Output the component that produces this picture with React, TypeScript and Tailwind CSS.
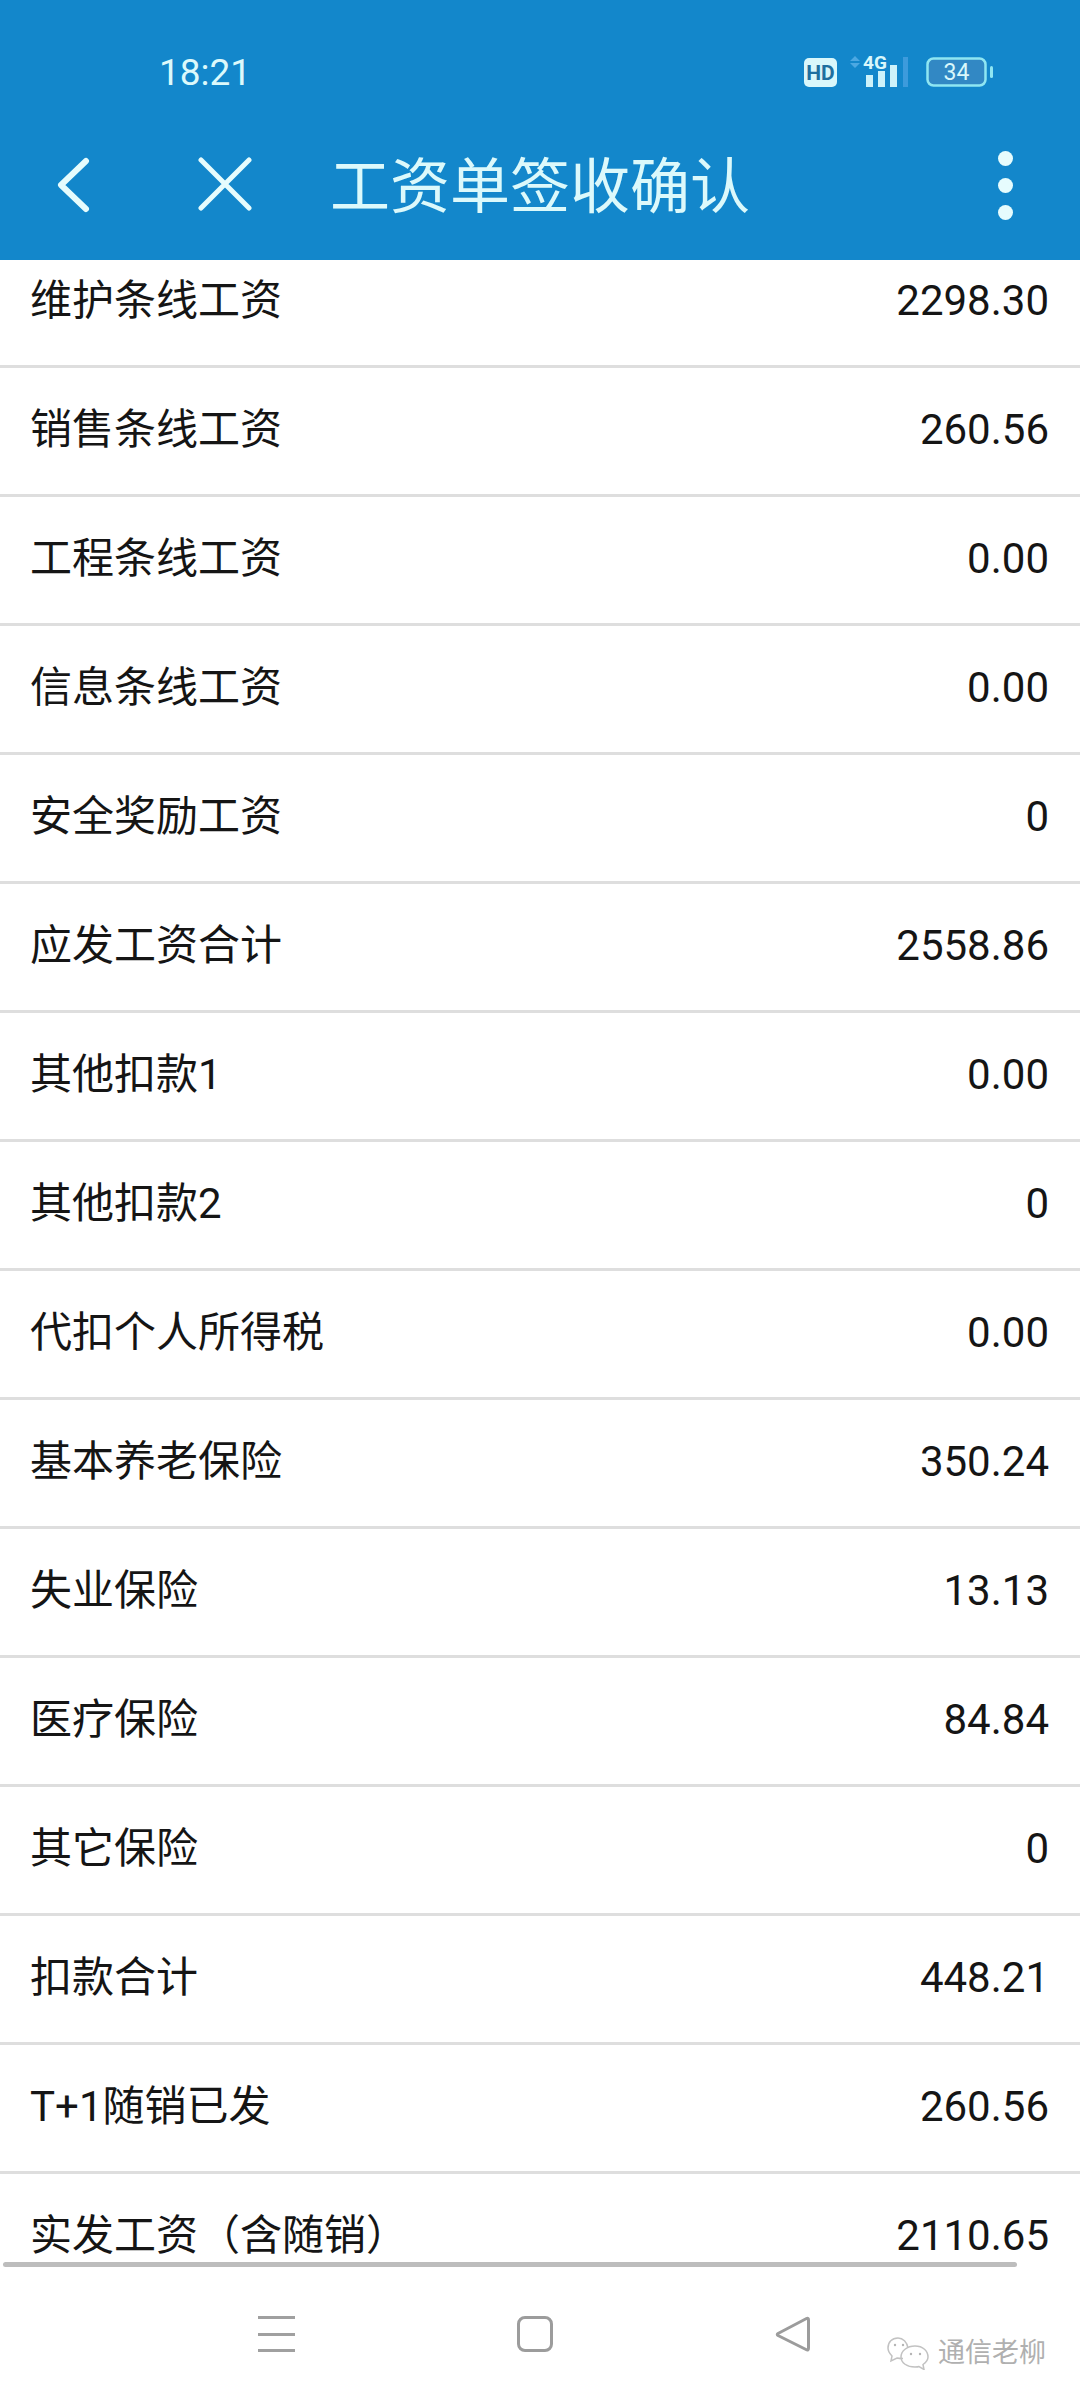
const rows: [string, string][] = [
  ["维护条线工资", "2298.30"],
  ["销售条线工资", "260.56"],
  ["工程条线工资", "0.00"],
  ["信息条线工资", "0.00"],
  ["安全奖励工资", "0"],
  ["应发工资合计", "2558.86"],
  ["其他扣款1", "0.00"],
  ["其他扣款2", "0"],
  ["代扣个人所得税", "0.00"],
  ["基本养老保险", "350.24"],
  ["失业保险", "13.13"],
  ["医疗保险", "84.84"],
  ["其它保险", "0"],
  ["扣款合计", "448.21"],
  ["T+1随销已发", "260.56"],
  ["实发工资（含随销）", "2110.65"],
];

const font = "font-['Roboto','Noto_Sans_CJK_SC',sans-serif]";

function StatusIcons() {
  return (
    <svg width="190" height="44" viewBox="0 -4 190 44" fill="none">
      <rect x="0" y="4" width="33" height="29" rx="5" fill="#d9f7fb" />
      <text x="16.500" y="25.500" textAnchor="middle" fontSize="21" fontWeight="700" fontFamily="Roboto" fill="#1f6f9f">HD</text>
      <path d="M51 2l-5 5h10zM51 14l-5-5h10z" fill="#4ca8e2" />
      <text x="71" y="15" textAnchor="middle" fontSize="19" fontWeight="700" fontFamily="Roboto" fill="#d9f7fb">4G</text>
      <rect x="62" y="21" width="7" height="12" fill="#cdf2fa" />
      <rect x="74" y="17" width="7" height="16" fill="#cdf2fa" />
      <rect x="86" y="11" width="7" height="22" fill="#cdf2fa" />
      <rect x="99" y="3" width="5" height="30" fill="#3d9bdc" />
      <rect x="123.500" y="4.500" width="58" height="27" rx="6" fill="#3288c4" stroke="#8fe6f2" strokeWidth="2.500" />
      <text x="152.500" y="26" textAnchor="middle" fontSize="23" fontFamily="Roboto" fill="#d9f7fb">34</text>
      <rect x="186" y="12" width="3" height="12" rx="1.500" fill="#8fe6f2" />
    </svg>
  );
}

export default function App() {
  return (
    <div className={`relative flex h-[2400px] w-[1080px] flex-col overflow-hidden bg-white ${font}`}>
      <header className="relative z-10 flex h-[260px] shrink-0 flex-col bg-[#1387cb] text-[#dcf9fb]">
        <div className="flex h-[144px] items-center justify-between pl-[159px] pr-[86px]">
          <span className="text-[37px] leading-none">18:21</span>
          <StatusIcons />
        </div>
        <div className="flex h-[116px] items-start">
          <svg className="ml-[54px] mt-[13px]" width="38" height="58" viewBox="0 0 38 58" fill="none" stroke="#e6fcfd" strokeWidth="6" strokeLinecap="round" strokeLinejoin="round">
            <path d="M32 4L7 28l25 24" />
          </svg>
          <svg className="ml-[105px] mt-[13px]" width="56" height="56" viewBox="0 0 56 56" fill="none" stroke="#e6fcfd" strokeWidth="5" strokeLinecap="round">
            <path d="M4 3l48 48M52 3L4 51" />
          </svg>
          <h1 className="ml-[77px] text-[60px] font-normal leading-[87px]">工资单签收确认</h1>
          <div className="ml-auto mr-[67px] mt-[7px] flex flex-col gap-[12px]">
            <span className="h-[15px] w-[15px] rounded-full bg-[#e6fcfd]" />
            <span className="h-[15px] w-[15px] rounded-full bg-[#e6fcfd]" />
            <span className="h-[15px] w-[15px] rounded-full bg-[#e6fcfd]" />
          </div>
        </div>
      </header>

      <main className="h-[2005px] shrink-0 overflow-hidden">
        <ul className="mt-[-21px]">
          {rows.map(([label, value]) => (
            <li key={label} className="flex h-[129px] items-center justify-between border-b-[3px] border-[#dedede] pb-[4px] pl-[30px] pr-[31px] text-[42px] text-[#151515]">
              <span>{label}</span>
              <span>{value}</span>
            </li>
          ))}
        </ul>
      </main>

      <div className="absolute left-[3px] top-[2262px] h-[5px] w-[1014px] rounded-full bg-[#bdbdbd]" />

      <nav className="flex flex-1 items-start pt-[51px]">
        <div className="ml-[258px] flex h-[36px] w-[37px] flex-col justify-between">
          <span className="h-[3px] bg-[#a0a0a0]" />
          <span className="h-[3px] bg-[#a0a0a0]" />
          <span className="h-[3px] bg-[#a0a0a0]" />
        </div>
        <div className="ml-[222px] h-[36px] w-[36px] rounded-[8px] border-[3px] border-[#9c9c9c]" />
        <svg className="ml-[220px]" width="38" height="38" viewBox="0 0 38 38" fill="none" stroke="#9c9c9c" strokeWidth="3" strokeLinejoin="round">
          <path d="M33.500 2.500Q35.500 1.500 35.500 4V32Q35.500 35 33 33.500L5 19.500Q3.500 18.500 5 17.500z" />
        </svg>
      </nav>

      <div className="absolute left-[886px] top-[2336px] flex items-center gap-[8px] text-[27px] leading-none text-[#b0b0b0]">
        <svg width="44" height="34" viewBox="0 0 44 34" fill="none" stroke="#c2c2c2" strokeWidth="1.500">
          <path d="M22 12C21 6 17 2 12 2 6 2 2 6 2 12c0 3 1 5 4 8l-1 5 6-3c2 .5 3 .5 6 .5" />
          <path d="M29 10c-8 0-14 5-14 11s6 10 14 10c2 0 3 0 4-.5l5 3-1-5c3-2 5-4 5-7.500 0-6-5-11-13-11z" />
          <circle cx="9" cy="9" r="1.200" fill="#b5b5b5" stroke="none" />
          <circle cx="17" cy="9" r="1.200" fill="#b5b5b5" stroke="none" />
          <circle cx="25" cy="18" r="1.200" fill="#b5b5b5" stroke="none" />
          <circle cx="34" cy="18" r="1.200" fill="#b5b5b5" stroke="none" />
        </svg>
        <span>通信老柳</span>
      </div>
    </div>
  );
}
